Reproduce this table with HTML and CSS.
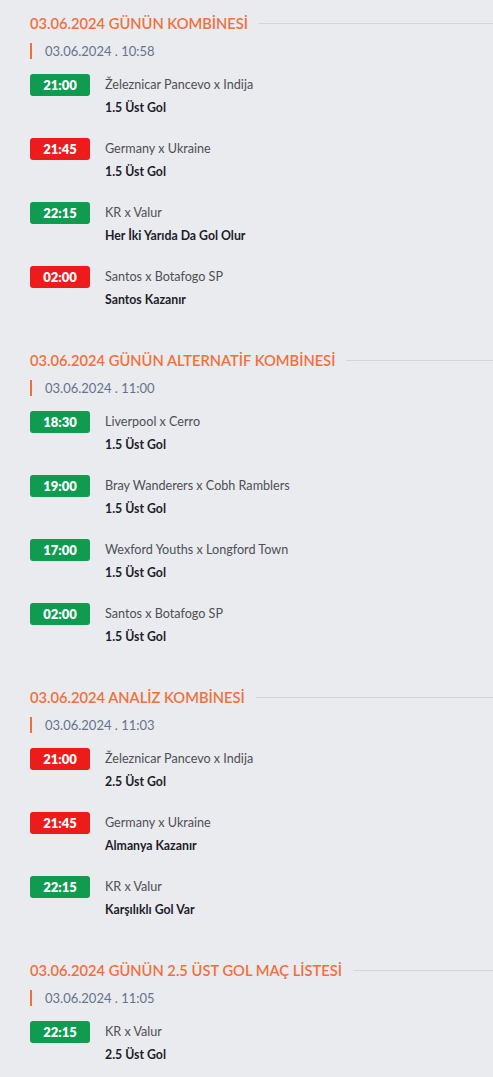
FILE: index.html
```html
<!DOCTYPE html>
<html lang="tr">
<head>
<meta charset="utf-8">
<title>Kombineler</title>
<link rel="stylesheet" href="styles.css">
</head>
<body>
<main class="page">
  <section class="block">
    <div class="block-head"><h2 class="block-title">03.06.2024 GÜNÜN KOMBİNESİ</h2><span class="rule"></span></div>
    <div class="stamp">03.06.2024 . 10:58</div>
    <ul class="matches">
      <li class="match"><span class="time win">21:00</span><div class="info"><div class="teams">Železnicar Pancevo x Indija</div><div class="pick">1.5 Üst Gol</div></div></li>
      <li class="match"><span class="time lose">21:45</span><div class="info"><div class="teams">Germany x Ukraine</div><div class="pick">1.5 Üst Gol</div></div></li>
      <li class="match"><span class="time win">22:15</span><div class="info"><div class="teams">KR x Valur</div><div class="pick">Her İki Yarıda Da Gol Olur</div></div></li>
      <li class="match"><span class="time lose">02:00</span><div class="info"><div class="teams">Santos x Botafogo SP</div><div class="pick">Santos Kazanır</div></div></li>
    </ul>
  </section>
  <section class="block">
    <div class="block-head"><h2 class="block-title">03.06.2024 GÜNÜN ALTERNATİF KOMBİNESİ</h2><span class="rule"></span></div>
    <div class="stamp">03.06.2024 . 11:00</div>
    <ul class="matches">
      <li class="match"><span class="time win">18:30</span><div class="info"><div class="teams">Liverpool x Cerro</div><div class="pick">1.5 Üst Gol</div></div></li>
      <li class="match"><span class="time win">19:00</span><div class="info"><div class="teams">Bray Wanderers x Cobh Ramblers</div><div class="pick">1.5 Üst Gol</div></div></li>
      <li class="match"><span class="time win">17:00</span><div class="info"><div class="teams">Wexford Youths x Longford Town</div><div class="pick">1.5 Üst Gol</div></div></li>
      <li class="match"><span class="time win">02:00</span><div class="info"><div class="teams">Santos x Botafogo SP</div><div class="pick">1.5 Üst Gol</div></div></li>
    </ul>
  </section>
  <section class="block">
    <div class="block-head"><h2 class="block-title">03.06.2024 ANALİZ KOMBİNESİ</h2><span class="rule"></span></div>
    <div class="stamp">03.06.2024 . 11:03</div>
    <ul class="matches">
      <li class="match"><span class="time lose">21:00</span><div class="info"><div class="teams">Železnicar Pancevo x Indija</div><div class="pick">2.5 Üst Gol</div></div></li>
      <li class="match"><span class="time lose">21:45</span><div class="info"><div class="teams">Germany x Ukraine</div><div class="pick">Almanya Kazanır</div></div></li>
      <li class="match"><span class="time win">22:15</span><div class="info"><div class="teams">KR x Valur</div><div class="pick">Karşılıklı Gol Var</div></div></li>
    </ul>
  </section>
  <section class="block">
    <div class="block-head"><h2 class="block-title">03.06.2024 GÜNÜN 2.5 ÜST GOL MAÇ LİSTESİ</h2><span class="rule"></span></div>
    <div class="stamp">03.06.2024 . 11:05</div>
    <ul class="matches">
      <li class="match"><span class="time win">22:15</span><div class="info"><div class="teams">KR x Valur</div><div class="pick">2.5 Üst Gol</div></div></li>
    </ul>
  </section>
</main>
</body>
</html>
```

FILE: styles.css
```css
html, body {
  margin: 0;
  padding: 0;
  background: #e9ebef;
}
body {
  font-family: "Lato", "Noto Sans", sans-serif;
  color: #1f1f2b;
}
.page {
  padding: 11px 0 0 30px;
  display: flex;
  flex-direction: column;
  gap: 38px;
}
.block-head {
  display: flex;
  align-items: center;
  gap: 11px;
  height: 22px;
  padding-top: 1px;
}
.block-title {
  margin: 0;
  font-size: 14.7px;
  font-weight: 600;
  color: #f0703c;
  white-space: nowrap;
  line-height: 22px;
}
.rule {
  flex: 1;
  height: 1px;
  background: #d2d5db;
}
.stamp {
  margin-top: 9px;
  height: 16px;
  line-height: 16px;
  border-left: 2px solid #f0703c;
  padding-left: 13px;
  font-size: 13px;
  color: #66728c;
}
.matches {
  list-style: none;
  margin: 15px 0 0;
  padding: 0;
  display: flex;
  flex-direction: column;
  gap: 20px;
}
.match {
  display: flex;
  gap: 15px;
}
.time {
  width: 60px;
  height: 22px;
  line-height: 22px;
  border-radius: 3px;
  text-align: center;
  color: #fff;
  font-size: 13px;
  font-weight: 800;
  flex: none;
}
.time.win { background: #0f9b50; }
.time.lose { background: #ee1b1b; }
.teams {
  height: 22px;
  line-height: 22px;
  font-size: 12.6px;
  color: #4f4f55;
}
.pick {
  margin-top: 2px;
  height: 20px;
  line-height: 20px;
  font-size: 12.3px;
  font-weight: 700;
  color: #1d1d29;
}
```
